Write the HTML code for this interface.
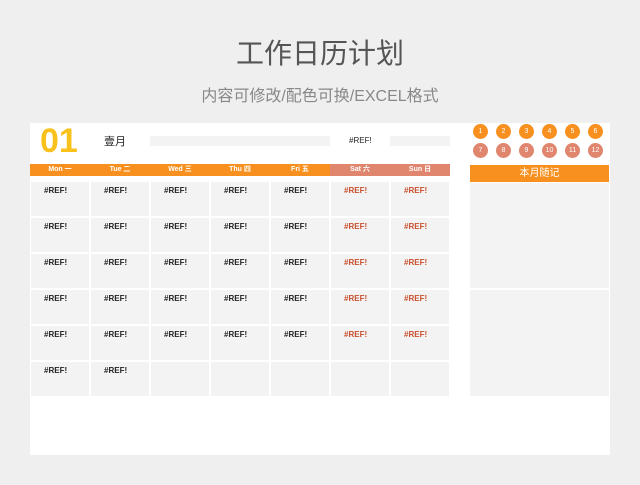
<!DOCTYPE html>
<html><head><meta charset="utf-8"><style>
*{margin:0;padding:0;box-sizing:border-box}
body{width:640px;height:485px;background:#efefef;position:relative;overflow:hidden;font-family:"Liberation Sans","Noto Sans CJK SC",sans-serif}
.a{position:absolute}
.t{left:0;width:640px;text-align:center}
.cell{position:absolute;width:58px;height:34px;background:#f3f3f3;font-size:8px;font-weight:bold;color:#222;padding:4px 0 0 13px}
.r{color:#c9502e}
.h{position:absolute;top:164px;height:12px;width:60px;color:#fff;font-size:7px;font-weight:bold;text-align:center;line-height:12px}
.c{position:absolute;width:15px;height:15px;border-radius:50%;color:#fff;font-size:7px;text-align:center;line-height:15px}
</style></head><body>
<div class="a t" style="top:37px;font-size:28px;color:#555;line-height:34px">工作日历计划</div>
<div class="a t" style="top:87px;font-size:16px;color:#888;line-height:20px">内容可修改/配色可换/EXCEL格式</div>
<div class="a" style="left:30px;top:123px;width:580px;height:332px;background:#fff"></div>
<div class="a" style="left:40px;top:121px;font-size:34px;font-weight:bold;color:#f9c11c;line-height:40px">01</div>
<div class="a" style="left:104px;top:133px;font-size:11px;color:#222">壹月</div>
<div class="a" style="left:150px;top:136px;width:180px;height:10px;background:#f3f3f3"></div>
<div class="a" style="left:349px;top:136px;font-size:8px;color:#222">#REF!</div>
<div class="a" style="left:390px;top:136px;width:60px;height:10px;background:#f3f3f3"></div>
<div class="a" style="left:30px;top:164px;width:300px;height:12px;background:#f7901e"></div>
<div class="a" style="left:330px;top:164px;width:120px;height:12px;background:#e0866e"></div>
<div class="h" style="left:30px">Mon 一</div><div class="h" style="left:90px">Tue 二</div><div class="h" style="left:150px">Wed 三</div><div class="h" style="left:210px">Thu 四</div><div class="h" style="left:270px">Fri 五</div><div class="h" style="left:330px">Sat 六</div><div class="h" style="left:390px">Sun 日</div>
<div id="g"></div>
<div class="a" style="left:470px;top:165px;width:139px;height:17px;background:#f7901e;color:#fff;font-size:10px;text-align:center;line-height:17px">本月随记</div>
<div class="a" style="left:470px;top:183px;width:139px;height:105px;background:#f3f3f3"></div>
<div class="a" style="left:470px;top:290px;width:139px;height:106px;background:#f3f3f3"></div>
<div class="c" style="left:473px;top:124px;background:#f7901e">1</div><div class="c" style="left:496px;top:124px;background:#f7901e">2</div><div class="c" style="left:519px;top:124px;background:#f7901e">3</div><div class="c" style="left:542px;top:124px;background:#f7901e">4</div><div class="c" style="left:565px;top:124px;background:#f7901e">5</div><div class="c" style="left:588px;top:124px;background:#f7901e">6</div>
<div class="c" style="left:473px;top:143px;background:#e0866e">7</div><div class="c" style="left:496px;top:143px;background:#e0866e">8</div><div class="c" style="left:519px;top:143px;background:#e0866e">9</div><div class="c" style="left:542px;top:143px;background:#e0866e">10</div><div class="c" style="left:565px;top:143px;background:#e0866e">11</div><div class="c" style="left:588px;top:143px;background:#e0866e">12</div>
<script>
var g='';for(var r=0;r<6;r++)for(var c=0;c<7;c++){var x=31+c*60,y=182+r*36;var txt='';if(r<5||c<2)txt='#REF!';g+='<div class="cell'+(c>=5?' r':'')+'" style="left:'+x+'px;top:'+y+'px">'+txt+'</div>';}
document.getElementById('g').outerHTML=g;
</script>
</body></html>
